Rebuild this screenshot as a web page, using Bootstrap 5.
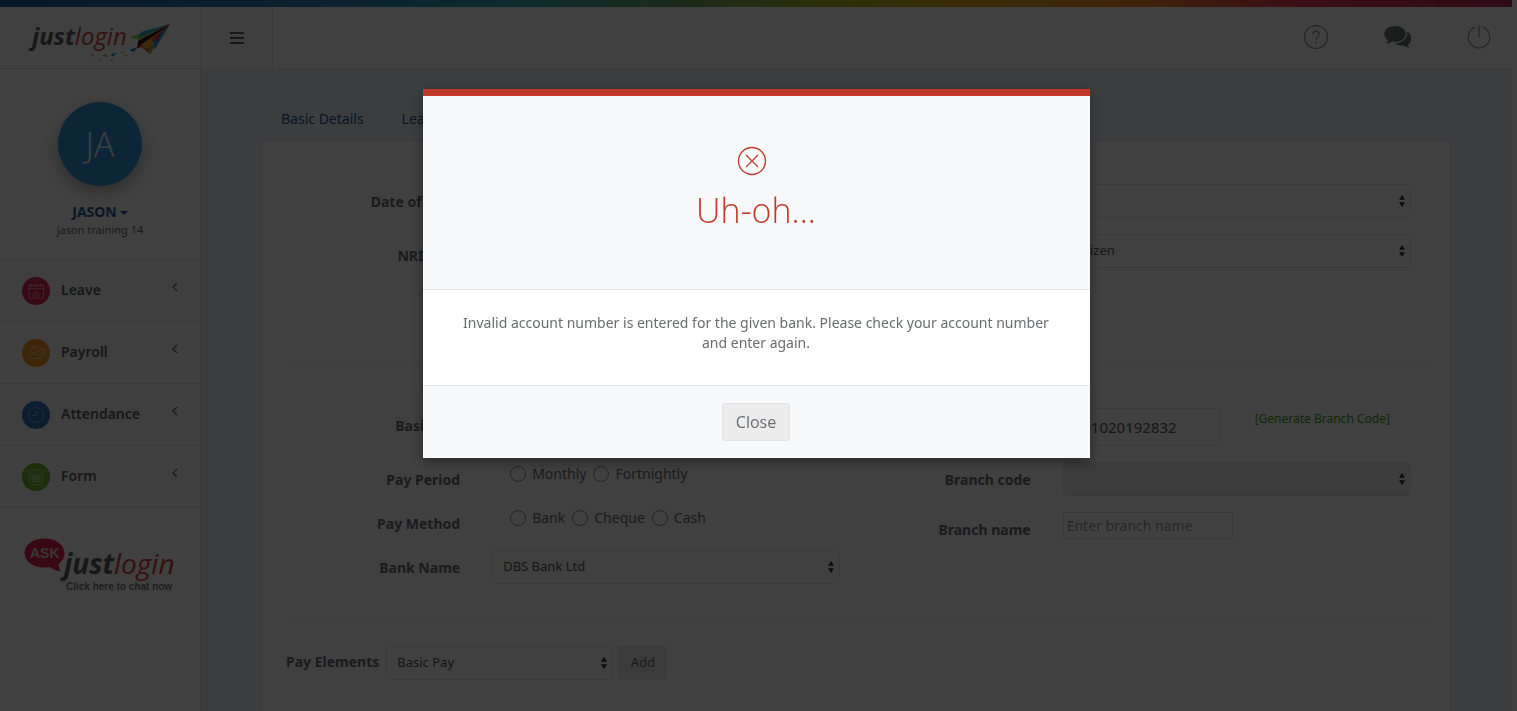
<!DOCTYPE html>
<html lang="en">
<head>
<meta charset="utf-8">
<meta name="viewport" content="width=device-width, initial-scale=1">
<title>JustLogin - Payroll Details</title>
<link href="https://cdn.jsdelivr.net/npm/bootstrap@5.3.0/dist/css/bootstrap.min.css" rel="stylesheet">
<style>
  :root { --edge: #e2e3e6; --soft: #e6e7e9; --gutter: 5px; --light-face: "Open Sans", "Noto Sans", sans-serif; }
  body { font-family: "Noto Sans", "Open Sans", sans-serif; font-size: 14px; line-height: 20px; color: #6a6c6f; background: #fff; overflow: hidden; }
  .app-shell { margin-right: var(--gutter); height: 100vh; }
  .rainbow { height: 7px; flex: none; background: linear-gradient(90deg, #1c5f9c 0%, #2f97bb 28%, #3fb0b4 36%, #70ac5c 46%, #adb822 55%, #f0a428 66%, #f0842c 76%, #e83c50 86%, #b02c5c 100%); }
  .top-bar { height: 62px; flex: none; border-bottom: 1px solid var(--edge); }
  .side-width { width: 201px; flex: none; border-right: 1px solid var(--edge); }
  .menu-toggle { width: 72px; border: 0; border-right: 1px solid var(--edge); background: #fafafa; padding-bottom: 2px; }
  .top-icons { gap: 54px; padding: 0 20px 2px 0; }
  .top-icons button { border: 0; background: none; padding: 0; line-height: 0; }
  .wordmark { font-family: var(--light-face); font-style: italic; font-weight: 700; fill: #5a5c5f; }
  .wordmark .thin { font-weight: 400; fill: #d8403e; }

  .profile-box { padding-top: 33px; height: 191px; border-bottom: 1px solid var(--edge); }
  .avatar { width: 84px; height: 84px; font-family: var(--light-face); font-size: 34px; font-weight: 300; color: #fff; background: #3498db; box-shadow: 0 6px 16px rgba(0,0,0,.3); }
  .profile-name { font-weight: 700; color: #2a5a9a; text-decoration: none; margin-top: 16px; }
  .profile-name::after { margin-left: 3px; vertical-align: 2px; border-width: 4px 4px 0; }
  .company { font-size: 11px; line-height: 16px; color: #6a6c6f; }
  .side-link { display: flex; align-items: center; height: 62px; padding: 0 22px; font-weight: 600; color: #5a5c60; text-decoration: none; background: #fafafa; border-bottom: 1px solid var(--edge); }
  .side-link span { padding-bottom: 2px; }
  .side-link .caret { margin-left: auto; margin-bottom: 8px; }
  .chat-link { padding: 28px 0 0 23px; }

  .main-area { background: #eff3f8; padding: 30px 61px 0; }
  .page-tabs .nav-link { padding: 10px 19px 11px 19px; color: #2a5a9a; border: 0; }
  .detail-card { border: 1px solid var(--edge); border-bottom: 0; background: #fff; padding: 43px 23px 0; }
  .first-block { height: 181px; }
  .second-block { margin-top: 42px; height: 215px; }
  .divider { margin: 0; border-top: 1px solid #eceded; opacity: 1; }
  .field-row { margin-bottom: 16px; }
  .field-row.compact { height: 28px; }
  .field-label { font-weight: 700; color: #6a6c6f; text-align: right; padding: 8px 16px 0 0; white-space: nowrap; }
  .field-control { padding: 0 16px; }
  .select-box { height: 34px; border: 1px solid var(--soft); border-radius: 5px; font-size: 13px; color: #55585b; padding: 0 24px 2px 10px; line-height: 20px;
    background-image: url("data:image/svg+xml,%3Csvg xmlns='http://www.w3.org/2000/svg' viewBox='0 0 8 14'%3E%3Cpath d='M1 5.7 4 1l3 4.7zM1 8.3 4 13l3-4.7z' fill='%23333'/%3E%3C/svg%3E");
    background-size: 8px 14px; background-position: right 4px center; }
  .select-box:disabled { background-color: #eee; }
  .account-box { width: 158px; height: 38px; padding: 0 10px; font-size: 15px; color: #55585b; border-color: var(--soft); border-radius: 5px; }
  .branch-box { width: 170px; height: 27px; border: 1px solid #dcdddf; padding: 0 3px; }
  .branch-box::placeholder { color: #a0a0a0; }
  .choice-set { padding-left: 34px; gap: 7px; }
  .choice { display: flex; align-items: center; gap: 6px; height: 24px; color: #6a6c6f; }
  .choice input { appearance: none; width: 16px; height: 16px; margin: 0; border: 1px solid #8a8c8e; border-radius: 50%; }
  .branch-link { color: #35a81c; font-size: 12px; line-height: 22px; text-decoration: none; white-space: nowrap; margin-left: 34px; }
  .elements-row { margin-top: 22px; gap: 5px; }
  .elements-row .field-label { padding: 0 2px 2px 0; }
  .elements-select { width: 227px; }
  .add-btn { height: 34px; width: 49px; font-size: 13px; padding: 0; background: #ececec; color: #6a6c6f; border: 1px solid #e6e6e6; border-radius: 3px; }

  .modal-backdrop { --bs-backdrop-opacity: .75; width: 100%; height: 100%; }
  .modal { padding-right: var(--gutter); }
  .alert-dialog { max-width: 667px; margin: 89px auto 0; }
  .alert-dialog .modal-content { border: 0; border-radius: 0; border-top: 7px solid #c0392b; box-shadow: 0 4px 12px rgba(0,0,0,.4); color: #6a6c6f; }
  .alert-head { height: 194px; background: #f7f9fb; border-bottom: 1px solid #e5e5e5; padding-top: 50px; }
  .alert-head svg { display: inline-block; vertical-align: top; }
  .alert-head h4 { font-family: var(--light-face); font-size: 34px; line-height: 44px; font-weight: 300; color: #c0392b; margin: 12px 0 0; }
  .alert-text { padding: 23px 30px 32px; }
  .alert-foot { border-top: 1px solid #e5e5e5; background: #f7f9fb; padding: 17px; }
  .close-btn { width: 68px; height: 38px; font-family: var(--light-face); font-size: 16px; padding: 0; color: #6a6c6f; background: #ececec; border: 1px solid #e2e2e2; border-radius: 3px; }
</style>
</head>
<body>
<div class="app-shell d-flex flex-column">
  <div class="rainbow"></div>
  <header class="top-bar d-flex">
    <a class="side-width d-block" href="#" aria-label="justlogin home">
      <svg width="180" height="60" viewBox="0 0 180 60">
        <text class="wordmark" x="32" y="38" font-size="24">just<tspan class="thin">login</tspan></text>
        <path d="M170 17 130 30l9 3z" fill="#8cc63f"/>
        <path d="M170 17 138 34l-1 8 8-5z" fill="#7a1238"/>
        <path d="M170 17 141 25l-3 6z" fill="#27a9c9"/>
        <path d="M170 17 139 38l11 9z" fill="#f0592a"/>
        <path d="m170 17-18 18 3 7z" fill="#1b9dd0"/>
        <path d="m150 29-9 8 6 5 7-5z" fill="#e5a52b"/>
        <path d="m155 35-7 9 2 3z" fill="#6fbf4a"/>
        <path d="m162 24-7 6 2 6z" fill="#d3264b"/>
        <path d="m170 17-32 17 1 5z" fill="#221122"/>
        <path d="m129 43 8-3-3 5zM111 47l6-1-5 4z" fill="#2090d0"/>
        <path d="m102 49 3-2 4 3zM91 47l3 1-2 2z" fill="#f08a3c"/>
        <path d="m120 46 5-2-2 2zM110 53l3-1-1 2z" fill="#62b883"/>
        <path d="m122 49 6-2-2 3zM97 53l3-1 1 2z" fill="#c8c8c8"/>
      </svg>
    </a>
    <button class="menu-toggle" type="button" aria-label="Toggle menu">
      <svg width="14" height="12" viewBox="0 0 14 12"><path d="M0 1h14M0 6h14M0 11h14" stroke="#5a5c5f" stroke-width="2"/></svg>
    </button>
    <div class="top-icons d-flex align-items-center ms-auto">
      <button type="button" aria-label="Help">
        <svg width="26" height="26" viewBox="0 0 26 26" fill="none" stroke="#8e9194" stroke-width="1.200"><circle cx="14" cy="13" r="11.400"/><path d="M11 10.200c0-4 6.200-4 6.200 0 0 2.600-3 2.800-3 5.600"/><circle cx="14.200" cy="18.600" r=".5"/></svg>
      </button>
      <button type="button" aria-label="Messages">
        <svg width="30" height="26" viewBox="0 0 30 26" fill="#6c7476"><path d="M13 2C7 2 2.200 5.600 2.200 10c0 2.400 1.500 4.600 3.800 6.200-.4 1.200-1 2.200-2 3.200 2.400-.1 4.300-.9 6-2 1 .2 2 .3 3 .3 6 0 10.800-3.400 10.800-7.800S19 2 13 2z"/><path d="M25.200 7.500c.6 6.500-4.700 11.300-12.300 12 2 1.700 5 2.600 8.400 2.100 1.700 1.200 3.600 1.900 6.300 2.100-.9-1-1.500-2-1.900-3.100 4.600-3 5.200-9.700-.5-13.100z"/></svg>
      </button>
      <button type="button" aria-label="Log out">
        <svg width="26" height="26" viewBox="0 0 26 26" fill="none" stroke="#8e9194" stroke-width="1.200"><path d="M13 1.500v12M9 3.100a10.800 10.800 0 1 0 8 0"/></svg>
      </button>
    </div>
  </header>

  <div class="d-flex flex-grow-1 overflow-hidden">
    <aside class="side-width">
      <div class="profile-box d-flex flex-column align-items-center">
        <div class="avatar rounded-circle d-flex align-items-center justify-content-center">JA</div>
        <a class="profile-name dropdown-toggle" href="#">JASON</a>
        <span class="company">jason training 14</span>
      </div>
      <nav>
        <a class="side-link" href="#">
          <svg class="me-2" width="31" height="28" viewBox="0 0 31 28" fill="none" stroke="#fff" stroke-opacity=".45"><circle cx="14" cy="14" r="14" fill="#e0245e" stroke="none"/><path d="M12 21H7V8.500h14.500V21H17M7 11.500h14.500M9.500 7v3M12.500 7v3M15.500 7v3M18.500 7v3"/><circle cx="14" cy="18.500" r="3"/><path d="M14 17v2l1 1"/></svg>
          <span>Leave</span>
          <svg class="caret" width="6" height="10" viewBox="0 0 6 10"><path d="M5 1 1 5l4 4" fill="none" stroke="#6a6c6f" stroke-width="1.300"/></svg>
        </a>
        <a class="side-link" href="#">
          <svg class="me-2" width="31" height="28" viewBox="0 0 31 28" fill="none" stroke="#fff" stroke-opacity=".45"><circle cx="14" cy="14" r="14" fill="#f7941e" stroke="none"/><circle cx="12.500" cy="11" r="3.200"/><path d="M6.500 19.500c0-6 12-6 12 0z"/><circle cx="20.500" cy="12.500" r="2.800"/><path d="M21.500 11.200c-2-.6-2 .9-.8 1.200s1 1.700-1 1.200"/></svg>
          <span>Payroll</span>
          <svg class="caret" width="6" height="10" viewBox="0 0 6 10"><path d="M5 1 1 5l4 4" fill="none" stroke="#6a6c6f" stroke-width="1.300"/></svg>
        </a>
        <a class="side-link" href="#">
          <svg class="me-2" width="31" height="28" viewBox="0 0 31 28" fill="none" stroke="#fff" stroke-opacity=".45"><circle cx="14" cy="14" r="14" fill="#2f73c0" stroke="none"/><circle cx="14" cy="14" r="7.500"/><path d="M14.500 10v4.500H10"/></svg>
          <span>Attendance</span>
          <svg class="caret" width="6" height="10" viewBox="0 0 6 10"><path d="M5 1 1 5l4 4" fill="none" stroke="#6a6c6f" stroke-width="1.300"/></svg>
        </a>
        <a class="side-link" href="#">
          <svg class="me-2" width="31" height="28" viewBox="0 0 31 28" fill="none" stroke="#fff" stroke-opacity=".45"><circle cx="14" cy="14" r="14" fill="#6cb52d" stroke="none"/><rect x="7.500" y="7" width="13" height="14.500" rx="2"/><path d="M17.500 7v2.500h3"/><path d="M10 12h8v6.500h-8zM10 14h8M10 16h8M12.500 12v6.500M15.500 12v6.500"/></svg>
          <span>Form</span>
          <svg class="caret" width="6" height="10" viewBox="0 0 6 10"><path d="M5 1 1 5l4 4" fill="none" stroke="#6a6c6f" stroke-width="1.300"/></svg>
        </a>
      </nav>
      <a class="chat-link d-block" href="#" aria-label="Ask justlogin">
        <svg width="155" height="60" viewBox="0 0 155 60">
          <path d="M21.500 2.500c-11 0-20 6-20 14.500s9 14.500 20 14.500c2 0 4-.2 5.500-.6 3 2.400 6.500 4 11 4-1.600-1.800-2.300-4-2.500-6.600 3.800-3 6-6.800 6-11.300 0-8.500-9-14.500-20-14.500z" fill="#e6214f"/>
          <text x="7" y="22" font-size="14" font-weight="700" font-family="Liberation Sans, sans-serif" fill="#ddd">ASK</text>
          <text class="wordmark" x="41" y="38" font-size="28">just<tspan class="thin">login</tspan></text>
          <text x="43" y="54" font-size="10" font-weight="700" font-family="Liberation Sans, sans-serif" fill="#7a7c7f">Click here to chat now</text>
        </svg>
      </a>
    </aside>

    <main class="main-area flex-grow-1 d-flex flex-column">
      <ul class="nav page-tabs flex-nowrap">
        <li class="nav-item"><a class="nav-link" href="#">Basic Details</a></li>
        <li class="nav-item"><a class="nav-link" href="#">Leave</a></li>
      </ul>
      <form class="detail-card flex-grow-1">
        <div class="first-block row g-0">
          <div class="col-6">
            <div class="field-row row g-0"><label class="field-label col-4" for="birth">Date of Birth</label><div class="field-control col-8"><input id="birth" class="form-control account-box" type="text"></div></div>
            <div class="field-row row g-0"><label class="field-label col-4" for="nric">NRIC No.</label><div class="field-control col-8"><input id="nric" class="form-control account-box" type="text"></div></div>
          </div>
          <div class="col-6">
            <div class="field-row row g-0"><label class="field-label col-4" for="gender">Gender</label><div class="field-control col-8"><select id="gender" class="form-select select-box"><option></option></select></div></div>
            <div class="field-row row g-0"><label class="field-label col-4" for="status">Status</label><div class="field-control col-8"><select id="status" class="form-select select-box"><option>Citizen</option></select></div></div>
          </div>
        </div>
        <hr class="divider">
        <div class="second-block row g-0">
          <div class="col-6">
            <div class="field-row row g-0"><label class="field-label col-4" for="basic">Basic Pay</label><div class="field-control col-8"><input id="basic" class="form-control account-box" type="text"></div></div>
            <div class="field-row compact row g-0" role="radiogroup" aria-labelledby="period"><span id="period" class="field-label col-4">Pay Period</span>
              <div class="field-control choice-set col-8 d-flex">
                <label class="choice"><input type="radio" name="period">Monthly</label>
                <label class="choice"><input type="radio" name="period">Fortnightly</label>
              </div></div>
            <div class="field-row compact row g-0" role="radiogroup" aria-labelledby="method"><span id="method" class="field-label col-4">Pay Method</span>
              <div class="field-control choice-set col-8 d-flex">
                <label class="choice"><input type="radio" name="method">Bank</label>
                <label class="choice"><input type="radio" name="method">Cheque</label>
                <label class="choice"><input type="radio" name="method">Cash</label>
              </div></div>
            <div class="field-row row g-0"><label class="field-label col-4" for="bank">Bank Name</label><div class="field-control col-8"><select id="bank" class="form-select select-box"><option>DBS Bank Ltd</option></select></div></div>
          </div>
          <div class="col-6">
            <div class="field-row row g-0"><label class="field-label col-4" for="account">Account No.</label><div class="field-control col-8 d-flex"><input id="account" class="form-control account-box" type="text" value="001020192832"><a class="branch-link" href="#">[Generate Branch Code]</a></div></div>
            <div class="field-row row g-0"><label class="field-label col-4" for="code">Branch code</label><div class="field-control col-8"><select id="code" class="form-select select-box" disabled><option></option></select></div></div>
            <div class="field-row row g-0"><label class="field-label col-4" for="branch">Branch name</label><div class="field-control col-8"><input id="branch" class="branch-box" type="text" placeholder="Enter branch name"></div></div>
          </div>
        </div>
        <hr class="divider">
        <div class="elements-row d-flex align-items-center">
          <label class="field-label" for="elements">Pay Elements</label>
          <select id="elements" class="form-select select-box elements-select"><option>Basic Pay</option></select>
          <button class="btn add-btn" type="button">Add</button>
        </div>
      </form>
    </main>
  </div>
</div>

<div class="modal-backdrop show"></div>
<div class="modal d-block" tabindex="-1" role="dialog" aria-labelledby="alertTitle">
  <div class="modal-dialog alert-dialog">
    <div class="modal-content text-center">
      <div class="alert-head">
        <svg class="me-2" width="30" height="30" viewBox="0 0 30 30" fill="none" stroke="#c0392b" stroke-width="1.300"><circle cx="15" cy="15" r="13.500"/><path d="m9 9 12 12M21 9 9 21"/></svg>
        <h4 id="alertTitle">Uh-oh...</h4>
      </div>
      <div class="alert-text">Invalid account number is entered for the given bank. Please check your account number and enter again.</div>
      <div class="alert-foot"><button class="btn close-btn" type="button">Close</button></div>
    </div>
  </div>
</div>
<script src="https://cdn.jsdelivr.net/npm/bootstrap@5.3.0/dist/js/bootstrap.bundle.min.js"></script>
</body>
</html>
